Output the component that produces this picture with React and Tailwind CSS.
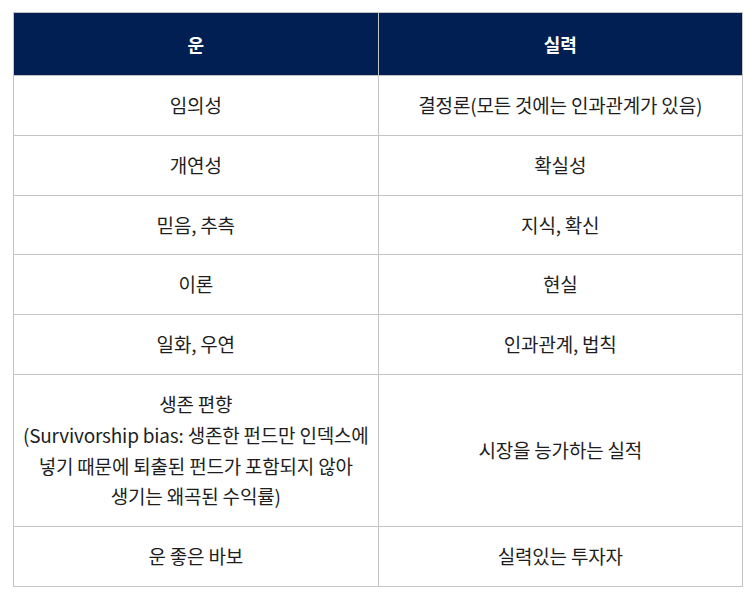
import React from "react";

const rows = [
    ["임의성", "결정론(모든 것에는 인과관계가 있음)"],
    ["개연성", "확실성"],
    ["믿음, 추측", "지식, 확신"],
    ["이론", "현실"],
    ["일화, 우연", "인과관계, 법칙"],
    [
        <>
            생존 편향
            <br />
            (Survivorship bias: 생존한 펀드만 인덱스에
            <br />
            넣기 때문에 퇴출된 펀드가 포함되지 않아
            <br />
            생기는 왜곡된 수익률)
        </>,
        "시장을 능가하는 실적",
    ],
    ["운 좋은 바보", "실력있는 투자자"],
];

const App = () => {
    return (
        <div
            className="bg-white pt-[12px] px-[13px] pb-3"
            style={{ fontFamily: '"Noto Sans CJK KR", "Open Sans", sans-serif' }}
        >
            <table className="w-[730px] border-collapse table-fixed text-[19px] text-[#1e1e1e]">
                <thead>
                    <tr className="bg-[#011f52] text-white">
                        <th className="h-[63px] p-0 border border-[#c4c4c4] font-bold leading-[30px] text-[18px]">운</th>
                        <th className="h-[63px] p-0 border border-[#c4c4c4] font-bold leading-[30px] text-[18px]">실력</th>
                    </tr>
                </thead>
                <tbody>
                    {rows.map(([luck, skill], i) => (
                        <tr key={i}>
                            <td className="border border-[#c4c4c4] text-center px-0 py-[14px] leading-[30.8px] whitespace-nowrap tracking-[-0.2px]">
                                {luck}
                            </td>
                            <td className="border border-[#c4c4c4] text-center px-0 py-[14px] leading-[30.8px] whitespace-nowrap tracking-[-0.2px]">
                                {skill}
                            </td>
                        </tr>
                    ))}
                </tbody>
            </table>
        </div>
    );
};

export default App;
